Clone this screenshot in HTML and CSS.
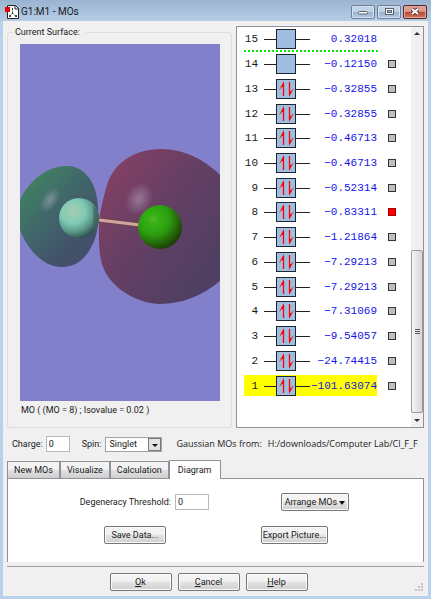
FILE: index.html
```html
<!DOCTYPE html>
<html lang="en">
<head>
    <meta charset="UTF-8">
    <meta name="viewport" content="width=device-width, initial-scale=1.0">
    <title>G1:M1 - MOs</title>
    <link rel="stylesheet" href="styles.css">
</head>
<body>
    <header class="titlebar">
        <svg class="app-icon" width="14" height="14" viewBox="0 0 14 14">
            <path d="M2.5 .5h8l3 3v10h-11z" fill="#fff" stroke="#222"/>
            <path d="M10 .5v3.500h3.500" fill="none" stroke="#222"/>
            <path d="M7.500 4v4M7.500 8l-3 3M7.500 8l3 3" fill="none" stroke="#999"/>
            <path d="M7 3h1v2h-1zM4 10h2v2h-2zM10 10h2v2h-2zM7 7h1v2h-1z" fill="#444"/>
            <rect x="0" y="2" width="5" height="5" fill="#e00000"/>
        </svg>
        <h1>G1:M1 - MOs</h1>
        <div class="window-buttons">
            <button type="button" aria-label="Minimize">
                <svg width="22" height="12" viewBox="0 0 22 12"><rect x="6.500" y="5.500" width="9" height="2.500" rx="1" fill="#fff" stroke="#56616e"/></svg>
            </button>
            <button type="button" aria-label="Maximize">
                <svg width="22" height="12" viewBox="0 0 22 12"><rect x="7.500" y="2.500" width="8" height="6" fill="#fff" stroke="#56616e"/><rect x="9.500" y="4.500" width="4" height="2" fill="#a9bcd2" stroke="#56616e"/></svg>
            </button>
            <button type="button" class="close" aria-label="Close">
                <svg width="22" height="12" viewBox="0 0 22 12"><path d="M8 3l6 5M14 3l-6 5" stroke="#5c3535" stroke-width="4"/><path d="M8 3l6 5M14 3l-6 5" stroke="#fff" stroke-width="2"/></svg>
            </button>
        </div>
    </header>

    <main class="client">
        <div class="top">
            <fieldset class="surface">
                <legend>Current Surface:</legend>
                <svg class="scene" viewBox="0 0 200 357" preserveAspectRatio="xMidYMid slice">
                    <defs>
                        <linearGradient id="greenLobe" x1=".2" y1=".1" x2=".75" y2=".75">
                            <stop offset="0" stop-color="#418062"/>
                            <stop offset=".5" stop-color="#40666a"/>
                            <stop offset="1" stop-color="#42506a"/>
                        </linearGradient>
                        <linearGradient id="redLobe" x1=".05" y1=".15" x2=".8" y2=".85">
                            <stop offset="0" stop-color="#834064"/>
                            <stop offset=".5" stop-color="#653f65"/>
                            <stop offset="1" stop-color="#503f62"/>
                        </linearGradient>
                        <radialGradient id="fluorine" cx=".35" cy=".33" r=".7">
                            <stop offset="0" stop-color="#a9cdb2"/>
                            <stop offset=".45" stop-color="#7fcab4"/>
                            <stop offset=".75" stop-color="#5a9585"/>
                            <stop offset="1" stop-color="#2f5150"/>
                        </radialGradient>
                        <radialGradient id="chlorine" cx=".35" cy=".32" r=".72">
                            <stop offset="0" stop-color="#57b43a"/>
                            <stop offset=".15" stop-color="#35b214"/>
                            <stop offset=".5" stop-color="#2d9d10"/>
                            <stop offset="1" stop-color="#1c3d05"/>
                        </radialGradient>
                        <radialGradient id="shine">
                            <stop offset="0" stop-color="#bcb0cc" stop-opacity=".5"/>
                            <stop offset="1" stop-color="#bcb0cc" stop-opacity="0"/>
                        </radialGradient>
                    </defs>
                    <rect width="200" height="357" fill="#8280cb"/>
                    <path d="M-1 158C8 137 28 121 48 122C67 123 79 142 78 170C80 190 69 223 42 223C22 223 6 204 -1 183Z" fill="url(#greenLobe)"/>
                    <path d="M79 176C80 169 83 154 87 141C93 121 112 105 142 105C164 105 187 117 201 132V236C184 251 163 260 140 260C119 260 91 245 83 223C78 210 79 190 79 176Z" fill="url(#redLobe)"/>
                    <ellipse cx="30" cy="156" rx="8" ry="14" fill="url(#shine)" transform="rotate(32 30 156)"/>
                    <ellipse cx="119" cy="155" rx="13" ry="17" fill="url(#shine)" transform="rotate(28 119 155)"/>
                    <path d="M79 176l41 5" stroke="#6e4650" stroke-width="5"/>
                    <path d="M79 176l41 5" stroke="#d3a49e" stroke-width="3"/>
                    <circle cx="59" cy="174" r="20" fill="url(#fluorine)"/>
                    <path d="M73 161L74 188Q79 181 79 173Q78 166 73 161Z" fill="#41645f" opacity=".7"/>
                    <circle cx="140" cy="183" r="22" fill="url(#chlorine)"/>
                </svg>
                <p>MO ( (MO = 8) ; Isovalue = 0.02 )</p>
            </fieldset>

            <div class="levels">
                <table>
                    <tbody id="orbitals"></tbody>
                </table>
                <div class="scrollbar">
                    <svg width="12" height="14" viewBox="0 0 12 14"><path d="M3 8l3-3 3 3z" fill="#333"/></svg>
                    <div class="thumb"><i></i><i></i><i></i></div>
                    <svg width="12" height="14" viewBox="0 0 12 14"><path d="M3 6l3 3 3-3z" fill="#333"/></svg>
                </div>
            </div>
        </div>

        <div class="state">
            <label for="charge">Charge:</label>
            <input type="text" id="charge" value="0">
            <label for="spin">Spin:</label>
            <span class="select-wrap">
                <select id="spin">
                    <option>Singlet</option>
                </select>
                <svg width="13" height="13" viewBox="0 0 13 13"><rect x=".5" y=".5" width="12" height="12" fill="#e2e2e2" stroke="#777b82"/><path d="M4 6h6l-3 3z" fill="#111"/></svg>
            </span>
            <span class="source"><span>Gaussian MOs from:</span><span>H:/downloads/Computer Lab/Cl_F_F</span></span>
        </div>

        <div class="tabs">
            <button type="button">New MOs</button>
            <button type="button">Visualize</button>
            <button type="button">Calculation</button>
            <button type="button" class="active">Diagram</button>
        </div>
        <section class="panel">
            <div class="threshold">
                <label for="threshold">Degeneracy Threshold:</label>
                <input type="text" id="threshold" value="0">
            </div>
            <button type="button" class="arrange">Arrange MOs
                <svg width="6" height="4" viewBox="0 0 6 4"><path d="M0 0h6l-3 4z" fill="#111"/></svg>
            </button>
            <button type="button" class="save">Save Data...</button>
            <button type="button" class="export">Export Picture...</button>
        </section>

        <footer>
            <button type="button"><u>O</u>k</button>
            <button type="button"><u>C</u>ancel</button>
            <button type="button"><u>H</u>elp</button>
            <svg class="grip" width="8" height="8" viewBox="0 0 8 8"><path d="M6 0h2v2h-2zM3 3h2v2h-2zM6 3h2v2h-2zM0 6h2v2h-2zM3 6h2v2h-2zM6 6h2v2h-2z" fill="#c3c3c3"/></svg>
        </footer>
    </main>

    <script>
        // Energies from orbital 15 down to orbital 1
        var energies = ['0.32018', '-0.12150', '-0.32855', '-0.32855', '-0.46713', '-0.46713', '-0.52314', '-0.83311',
            '-1.21864', '-7.29213', '-7.29213', '-7.31069', '-9.54057', '-24.74415', '-101.63074'];
        var homo = 13;
        var arrows = '<path d="M19.500 17V4M25.500 3v13" stroke="#f00" stroke-width="1.300"/><path d="M20 2v6h-2l-3 3zM25 18v-6h2l3-3z" fill="#f00"/>';

        document.getElementById('orbitals').innerHTML = energies.map(function (energy, i) {
            var n = energies.length - i;
            var rowClass = n === 15 ? 'divider' : n === 1 ? 'selected' : '';
            var mark = n === 15 ? '' : '<input type="checkbox" aria-label="Surface ' + n + '"' + (n === 8 ? ' checked' : '') + '>';
            return '<tr class="' + rowClass + '"><td class="number">' + n + '</td>' +
                '<td class="diagram"><svg width="46" height="20" viewBox="0 0 46 20">' +
                '<path d="M0 10.500h46" stroke="#222"/>' +
                '<rect x="12.500" y=".5" width="19" height="19" fill="#a0bfe0" stroke="#1c2630"/>' +
                (n <= homo ? arrows : '') + '</svg></td>' +
                '<td class="energy">' + energy.replace('-', '\u2212') + '</td>' +
                '<td class="mark">' + mark + '</td></tr>';
        }).join('');
    </script>
</body>
</html>
```
FILE: styles.css
```css
* {
    box-sizing: border-box;
}

body {
    margin: 0;
    min-height: 100vh;
    display: flex;
    flex-direction: column;
    padding: 0 3px 4px;
    background: #b9d1ea;
    font-family: Roboto, "Liberation Sans", sans-serif;
    font-size: 9px;
    line-height: 12px;
    color: #1a1a1a;
}

button, input, select {
    font: inherit;
    color: inherit;
}

.titlebar {
    display: flex;
    align-items: center;
    gap: 2px;
    height: 21px;
    margin: 0 -3px;
    padding: 2px 4px 0 5px;
    background: linear-gradient(#9ab3d0, #b5cde7);
}

h1 {
    flex: 1;
    margin: 0;
    font-size: 10px;
    font-weight: normal;
}

.window-buttons {
    display: flex;
    gap: 2px;
}

.window-buttons button {
    display: flex;
    padding: 0;
    border: 1px solid #6d7f96;
    border-radius: 2px;
    background: linear-gradient(#c3d3e6 45%, #9db4ce 50%, #b3c9e0);
    box-shadow: inset 0 0 0 1px #d5e1ee;
}

.window-buttons .close {
    border-color: #5b2523;
    background: linear-gradient(#dc9c8f 45%, #bd4434 50%, #d07a60);
    box-shadow: inset 0 0 0 1px #e0aaa0;
}

.client {
    flex: 1;
    display: flex;
    flex-direction: column;
    padding: 5px 4px;
    background: #f0f0f0;
}

.top {
    display: flex;
    gap: 4px;
}

.surface {
    flex: 1;
    min-width: 0;
    margin: 0;
    padding: 6px 11px 8px 12px;
    border: 1px solid #d8dfe5;
    border-radius: 3px;
}

legend {
    margin-left: -7px;
    padding: 0 6px 0 2px;
}

.scene {
    display: block;
    width: 100%;
    height: 357px;
}

.surface p {
    margin: 3px 1px 0;
}

.levels {
    display: flex;
    width: 188px;
    height: 402px;
    border: 1px solid #8e939b;
    background: #fff;
}

.levels table {
    width: 174px;
    height: 371px;
    padding-left: 7px;
    border-spacing: 0;
    font-family: "Liberation Mono", monospace;
    font-size: 11px;
}

.levels td {
    padding: 0;
    vertical-align: middle;
}

.levels .number {
    width: 14px;
    text-align: right;
}

.levels .diagram {
    width: 53px;
    padding-left: 6px;
}

.diagram svg {
    display: block;
}

.levels .energy {
    width: 66px;
    text-align: right;
    color: #1414e6;
}

.levels .mark {
    padding-left: 11px;
}

.divider {
    background: repeating-linear-gradient(90deg, #0e0 0 2px, transparent 2px 4px) no-repeat 0 100% / 136px 2px;
}

.selected .number,
.selected .diagram,
.selected .energy {
    background: linear-gradient(#ff0, #ff0) no-repeat 0 50% / 100% 21px;
}

.mark input {
    display: block;
    appearance: none;
    width: 8px;
    height: 8px;
    margin: 0;
    border: 1px solid #333;
    background: #c0c0c0;
}

.mark input:checked {
    border-color: #a00;
    background: #f00;
}

.scrollbar {
    display: flex;
    flex: 1;
    flex-direction: column;
    background: #f0f0f0;
}

.thumb {
    display: flex;
    flex-direction: column;
    align-items: center;
    justify-content: center;
    gap: 1px;
    height: 163px;
    margin-top: auto;
    border: 1px solid #9a9a9a;
    border-radius: 2px;
    background: linear-gradient(90deg, #f5f5f5, #d6d6d6);
}

.thumb i {
    width: 5px;
    height: 1px;
    background: #555;
}

.state {
    display: flex;
    align-items: center;
    height: 32px;
    padding: 0 5px;
    white-space: nowrap;
}

input[type="text"] {
    width: 24px;
    height: 16px;
    padding: 0 2px;
    border: 1px solid #b5b8bf;
    background: #fff;
}

#charge {
    margin: 0 12px 0 3px;
}

.select-wrap {
    position: relative;
    display: flex;
    margin: 0 14px 0 4px;
}

.select-wrap svg {
    position: absolute;
    top: 1px;
    right: 1px;
    pointer-events: none;
}

select {
    width: 57px;
    height: 15px;
    padding: 0 3px;
    appearance: none;
    border: 1px solid #9da1a8;
    border-radius: 0;
    background: #fff;
}

.source {
    display: flex;
    flex: 1;
    gap: 6px;
    overflow: hidden;
    font-family: "Open Sans", sans-serif;
}

.tabs {
    display: flex;
    align-items: flex-end;
    height: 18px;
}

.tabs button {
    height: 17px;
    padding: 0 6px;
    border: 1px solid #8e939b;
    border-width: 1px 1px 0 1px;
    background: linear-gradient(#f3f3f3 45%, #e2e2e2 50%, #cfcfcf);
}

.tabs .active {
    position: relative;
    height: 19px;
    margin-bottom: -1px;
    padding: 0 8px;
    background: #fff;
}

.panel {
    display: grid;
    grid-template-columns: 1fr 152px;
    grid-template-rows: 18px 18px;
    gap: 15px 8px;
    align-items: center;
    height: 84px;
    padding: 14px 10px 0;
    border: 1px solid #8e939b;
    border-bottom: 0;
    background: #fff;
}

.threshold {
    display: flex;
    align-items: center;
    justify-content: flex-end;
    gap: 4px;
    margin-right: 44px;
}

#threshold {
    width: 34px;
}

.panel button,
footer button {
    height: 18px;
    padding: 0;
    border: 1px solid #777;
    border-radius: 2px;
    background: linear-gradient(#f3f3f3 45%, #e3e3e3 50%, #d0d0d0);
    box-shadow: inset 0 0 0 1px #fafafa;
    white-space: nowrap;
}

.arrange {
    width: 68px;
    margin-left: 20px;
}

.arrange svg {
    vertical-align: middle;
}

.save {
    justify-self: end;
    width: 62px;
    margin-right: 87px;
}

.export {
    width: 67px;
}

footer {
    display: flex;
    position: relative;
    justify-content: center;
    gap: 6px;
    margin-top: 4px;
    padding-top: 6px;
    padding-right: 14px;
    border-top: 1px solid #a0a0a0;
}

footer button {
    width: 62px;
}

.grip {
    position: absolute;
    right: 1px;
    bottom: 0;
}
```
